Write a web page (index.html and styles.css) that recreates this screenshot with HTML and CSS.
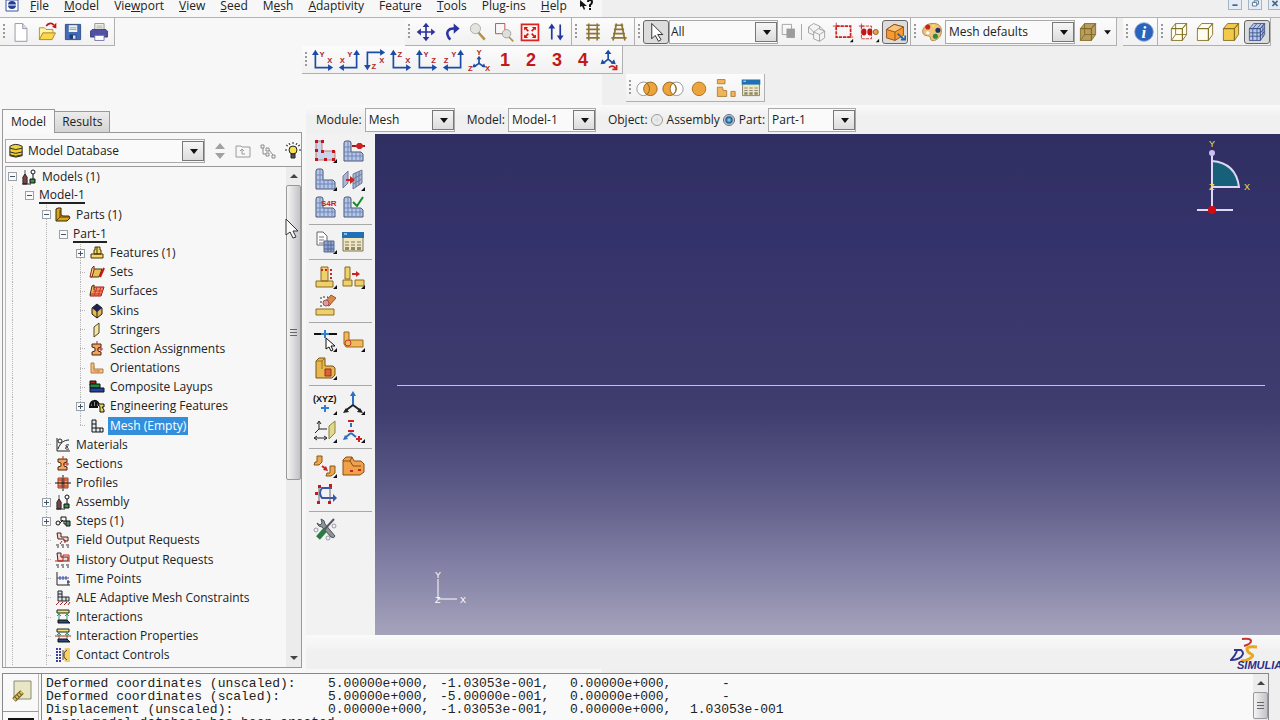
FILE: index.html
```html
<!DOCTYPE html>
<html lang="en">
<head>
  <meta charset="UTF-8">
  <meta name="viewport" content="width=device-width, initial-scale=1.0">
  <title>Mesh - Model-1</title>
  <link rel="stylesheet" href="styles.css">
</head>
<body>
  <!-- shared icon shapes -->
  <svg class="sprite" aria-hidden="true">
    <symbol id="lmesh" viewBox="0 0 26 26">
      <path d="M4 5q0-2 2-2h3q2 0 2 2v9h10l2 2v7H4z" fill="#b4c6ea" stroke="#4a556f"/>
      <path d="M4 9h7M4 14h7M4 18h19M8 3v20M12 14v9M16 14v9M20 14v9" stroke="#7185b3" fill="none"/>
    </symbol>
    <symbol id="corner" viewBox="0 0 26 26"><path d="M25 21v4h-4z" fill="#111"/></symbol>
    <symbol id="db-table" viewBox="0 0 26 26">
      <path d="M3 4h20v18H3z" fill="#efe6bd" stroke="#7b7756"/>
      <path d="M2 3h22v6H2z" fill="#2170b5"/><path d="M4 5h3" stroke="#fff"/>
      <path d="M5 13h4M11 13h4M17 13h4M5 16h4M11 16h4M17 16h4" stroke="#777"/>
      <path d="M5 18h4v3H5zM11 18h4v3h-4zM17 18h4v3h-4z" fill="#8d8a6c"/>
    </symbol>
    <symbol id="cube" viewBox="0 0 26 26">
      <path d="M4 9l5-6h13l-5 6zM4 9h13v14H4zM17 9l5-6v13l-5 7z" stroke="#7c6a1c" stroke-linejoin="round"/>
    </symbol>
    <symbol id="i-tower" viewBox="0 0 16 16">
      <path d="M2 15V8l2-3 2 3v7zM1 15h9" fill="#8c3a3a" stroke="#222"/><path d="M4 1v4M1 9h6M1 12h6" stroke="#555"/>
      <circle cx="12" cy="3" r="2" fill="#fff" stroke="#111"/><path d="M12 5v5" stroke="#111"/><path d="M9 10h5v4H9z" fill="#3b8f4c" stroke="#111"/>
    </symbol>
    <symbol id="i-part" viewBox="0 0 16 16">
      <path d="M1 2l2-1h3v7l2 1h6l1 2-3 3H1z" fill="#d9a520" stroke="#3a2500"/><path d="M5 3v7h9M1 14l4-4" fill="none" stroke="#5a3c00"/>
    </symbol>
    <symbol id="i-feature" viewBox="0 0 16 16">
      <path d="M2 9h12v4H2zM5 9V5h1V2h5v3h1v4z" fill="#f4d570" stroke="#473500"/><path d="M8 2v7" stroke="#473500"/>
    </symbol>
    <symbol id="i-set" viewBox="0 0 16 16">
      <path d="M4 5h9l-3 8H2z" fill="#e9bf55" stroke="#403010"/><path d="M11 13l4-9" stroke="#c81414" stroke-width="2"/><path d="M1 13l2-9 2-2v4l-2 7z" fill="#f3d98c" stroke="#8a2010"/>
    </symbol>
    <symbol id="i-surface" viewBox="0 0 16 16">
      <path d="M4 4h11l-3 9H1z" fill="#f28a66" stroke="#a01a10"/><path d="M8 4l-3 9M12 4l-3 9M3 8h11M2 11h10" stroke="#c9382a"/><path d="M1 12l2-9 2-1v5" fill="#f1c25c" stroke="#403010"/>
    </symbol>
    <symbol id="i-skin" viewBox="0 0 16 16">
      <path d="M8 1l5 4v6l-5 4-5-4V5z" fill="#e7b95b" stroke="#20180a"/><path d="M8 1l5 4-5 4-5-4z" fill="#1b2550"/><path d="M8 8v7" stroke="#20180a"/>
    </symbol>
    <symbol id="i-stringer" viewBox="0 0 16 16"><path d="M5 5l5-4v10l-5 4z" fill="#f5e69d" stroke="#4b4632"/></symbol>
    <symbol id="i-section" viewBox="0 0 16 16">
      <path d="M3 3h9v3l-3 1v3l3 1v3H3v-3l3-1V7L3 6z" fill="#f0a45c" stroke="#4a2410"/><path d="M8 0v3M8 8h6M12 6v4" stroke="#b5281b" fill="none"/>
    </symbol>
    <symbol id="i-orient" viewBox="0 0 16 16"><path d="M2 3h3v6h9v4H2z" fill="#f2bf84" stroke="#b77b3e"/><path d="M5 6v5h6M9 9v4" stroke="#c98a4b" fill="none"/></symbol>
    <symbol id="i-layup" viewBox="0 0 16 16">
      <path d="M1 2h6v4H1z" fill="#a52020" stroke="#111"/><path d="M1 5h10v4H1z" fill="#1f8a3d" stroke="#111"/><path d="M1 9h14v4H1z" fill="#2442a8" stroke="#111"/>
    </symbol>
    <symbol id="i-eng" viewBox="0 0 16 16">
      <path d="M1 9c0-8 9-8 9-1M4 4v5M7 4v5M0 9h9" fill="#888" stroke="#111" stroke-width="2"/><path d="M9 6h6v3h-2l2 3v2h-4V9z" fill="#ecd652" stroke="#111"/>
    </symbol>
    <symbol id="i-mesh" viewBox="0 0 16 16"><path d="M3 2h4v8h7v4H3zM3 6h4M3 10h4v4M11 10v4" fill="#e6ecf5" stroke="#111"/></symbol>
    <symbol id="i-material" viewBox="0 0 16 16"><path d="M2 1v13h13M3 12C5 6 9 3 14 3" fill="none" stroke="#222"/><circle cx="5" cy="4" r="2" fill="none" stroke="#222"/><path d="M14 8c-4-1-4 2-1 2-4 0-3 3 1 2" fill="none" stroke="#222"/></symbol>
    <symbol id="i-profile" viewBox="0 0 16 16"><path d="M3 3h4v10H3zM9 3h4v10H9z" fill="#ee9a72" stroke="#a33b22"/><path d="M0 8h16M8 0v16" stroke="#111"/><path d="M3 5h10M3 11h10" stroke="#a33b22"/></symbol>
    <symbol id="i-step" viewBox="0 0 16 16"><circle cx="3" cy="10" r="2" fill="none" stroke="#111"/><path d="M5 10l3-3M6 4h5v4H6z" fill="none" stroke="#111"/><path d="M11 8h4v5h-4z" fill="#4e9461" stroke="#111"/><path d="M9 8v3h2" fill="none" stroke="#111"/></symbol>
    <symbol id="i-field" viewBox="0 0 16 16"><path d="M2 1h4v4h7v4H9V7H3z" fill="#f3d8d2" stroke="#4a2020"/><path d="M7 9l-2 3M10 8v3" stroke="#a32020"/><path d="M1 13h3M6 13h3M11 13h3M2 15h2M7 15h2M12 15h2" stroke="#333"/></symbol>
    <symbol id="i-history" viewBox="0 0 16 16"><path d="M2 1h4v4h7v4H3z" fill="#f3d8d2" stroke="#4a2020"/><path d="M0 9h8V3h6v7" fill="none" stroke="#d01a1a"/><path d="M1 13h3M6 13h3M11 13h3M2 15h2M7 15h2M12 15h2" stroke="#333"/></symbol>
    <symbol id="i-time" viewBox="0 0 16 16"><path d="M2 1v13h13" fill="none" stroke="#222"/><path d="M2 7h12M5 5v4M8 5v4M11 5v4" stroke="#3546a0"/><path d="M13 9v5M12 11h3" stroke="#222"/></symbol>
    <symbol id="i-ale" viewBox="0 0 16 16"><path d="M3 1h4v6h7v4H3zM3 4h4M3 7h4v4M11 7v4" fill="#dbe0f0" stroke="#222"/><path d="M1 15l3-3M5 15l3-3M9 15l3-3M13 15l2-3" stroke="#a32222"/></symbol>
    <symbol id="i-inter" viewBox="0 0 16 16"><path d="M2 1h12v3H2z" fill="#efe47a" stroke="#222"/><path d="M4 4v7M12 4v7M2 7l2-2 2 2M10 7l2-2 2 2" stroke="#299866" fill="none"/><path d="M3 11h9l3 3H3z" fill="#2d4b7c" stroke="#111"/></symbol>
    <symbol id="i-contact" viewBox="0 0 16 16"><path d="M10 1h5v14h-5l-2-7z" fill="#f2d267"/><path d="M2 1v14M5 1v14" stroke="#3c41a8" stroke-width="2" stroke-dasharray="2 1"/><path d="M8 3v10M12 3c-4 2-4 8 0 10" stroke="#593a3e" fill="none"/></symbol>
  </svg>

  <header class="menubar">
    <svg class="app-mark" viewBox="0 0 14 12"><path d="M1 0h12v11H1z" fill="#fff" stroke="#3b57a8"/><ellipse cx="7" cy="5" rx="4" ry="4" fill="#243f94"/><path d="M2 5h10" stroke="#fff"/></svg>
    <nav class="menus">
      <a href="#"><u>F</u>ile</a>
      <a href="#"><u>M</u>odel</a>
      <a href="#">Vie<u>w</u>port</a>
      <a href="#"><u>V</u>iew</a>
      <a href="#"><u>S</u>eed</a>
      <a href="#">M<u>e</u>sh</a>
      <a href="#"><u>A</u>daptivity</a>
      <a href="#">Feat<u>u</u>re</a>
      <a href="#"><u>T</u>ools</a>
      <a href="#">Plu<u>g</u>-ins</a>
      <a href="#"><u>H</u>elp</a>
    </nav>
    <button class="plain" aria-label="Context help"><svg width="14" height="12" viewBox="0 0 14 12"><path d="M1 0v7l2-1 2 4 1-1-1-3h3z" fill="#111"/><path d="M9 2q0-2 2-2 2 0 2 2t-2 3v2M11 8v2" fill="none" stroke="#111" stroke-width="2"/></svg></button>
    <div class="win-buttons">
      <button aria-label="Minimize"><svg viewBox="0 0 14 10"><path d="M4 6h6" stroke="#456a86" stroke-width="2"/></svg></button>
      <button aria-label="Restore"><svg viewBox="0 0 14 10"><path d="M6 3V1h5v4H9M4 3h5v4H4z" fill="#fff" stroke="#456a86"/></svg></button>
      <button aria-label="Close"><svg viewBox="0 0 14 10"><path d="M4 1l6 6M10 1L4 7" stroke="#456a86" stroke-width="2"/></svg></button>
    </div>
  </header>

  <div class="toolrow">
    <div class="toolbar">
      <button aria-label="New"><svg viewBox="0 0 26 26"><path d="M6 3h9l5 6v15H6z" fill="#fff" stroke="#8a8aa0"/><path d="M15 3v6h5" fill="#dde" stroke="#8a8aa0"/></svg></button>
      <button aria-label="Open"><svg viewBox="0 0 26 26"><path d="M4 22V8h6l2 2h8v4" fill="#fff3a8" stroke="#a08628"/><path d="M4 22l4-8h15l-4 8z" fill="#fbd64b" stroke="#a07a18"/><path d="M12 6c3-4 7-4 9-1" fill="none" stroke="#c41515" stroke-width="2"/><path d="M19 7l5 2V2z" fill="#c41515"/></svg></button>
      <button aria-label="Save"><svg viewBox="0 0 26 26"><path d="M4 4h18v18H4z" fill="#426cb8" stroke="#2a4580"/><path d="M8 5h10v8H8z" fill="#eef3ee"/><path d="M9 8h8M9 10h8" stroke="#8aa08a"/><path d="M9 16h8v5H9z" fill="#233c6e"/><path d="M13 17h3v4h-3z" fill="#dde"/></svg></button>
      <button aria-label="Print"><svg viewBox="0 0 26 26"><path d="M8 3h11v8H8z" fill="#f0f0e4" stroke="#888"/><path d="M10 6h7M10 8h7" stroke="#aaa"/><path d="M3 12l2-2h16l2 2v7H3z" fill="#5252a4" stroke="#35356e"/><path d="M8 17h11v6H8z" fill="#fff" stroke="#6a6aa0"/></svg></button>
    </div>
    <div class="toolbar view-tools">
      <button aria-label="Pan"><svg viewBox="0 0 26 26" fill="#2b35a0"><path d="M12 6h2v14h-2zM6 12h14v2H6z"/><path d="M13 2l4 5H9zM13 24l4-5H9zM2 13l5-4v8zM24 13l-5-4v8z"/></svg></button>
      <button aria-label="Rotate"><svg viewBox="0 0 26 26"><path d="M11 22C4 14 8 8 17 9" fill="none" stroke="#2b35a0" stroke-width="3"/><path d="M15 3l7 6-7 6z" fill="#2b35a0"/></svg></button>
      <button aria-label="Zoom"><svg viewBox="0 0 26 26"><path d="M13 13l8 9" stroke="#b59343" stroke-width="3"/><circle cx="10" cy="9" r="6" fill="#e3e3e0" stroke="#a5a5a5"/></svg></button>
      <button aria-label="Box zoom"><svg viewBox="0 0 26 26"><path d="M3 3h11v12H3z" fill="none" stroke="#c33"/><path d="M18 18l6 6" stroke="#b59343" stroke-width="2"/><circle cx="16" cy="15" r="5" fill="#dededa" stroke="#999"/></svg></button>
      <button aria-label="Auto-fit"><svg viewBox="0 0 26 26"><path d="M3 4h20v19H3z" fill="#fff4f0" stroke="#d22" stroke-width="2"/><path d="M6 11V7h5zM20 11V7h-5zM6 16v4h5zM20 16v4h-5z" fill="#d01515"/><path d="M7 8l4 4M19 8l-4 4M7 19l4-4M19 19l-4-4" stroke="#d01515" stroke-width="2"/></svg></button>
      <button aria-label="Cycle views"><svg viewBox="0 0 26 26" fill="#2336a0"><path d="M7 7h2v15H7zM17 4h2v15h-2z"/><path d="M8 3l4 6H4zM18 23l4-6h-8z"/></svg></button>
    </div>
    <div class="toolbar">
      <button aria-label="Parallel view"><svg viewBox="0 0 26 26"><path d="M8 3v20M18 3v20M5 5h16M5 10h16M5 15h16M5 20h16" stroke="#8f7434" stroke-width="2"/></svg></button>
      <button aria-label="Perspective view"><svg viewBox="0 0 26 26"><path d="M10 3L6 23M16 3l4 20M8 5h10M7 10h12M6 15h14M4 20h18" stroke="#8f7434" stroke-width="2"/></svg></button>
    </div>
    <div class="toolbar">
      <button class="pressed" aria-label="Select"><svg viewBox="0 0 26 26"><path d="M8 3v18l4-4 4 7 3-2-4-6h6z" fill="#fff" stroke="#111"/></svg></button>
      <span class="combo w-filter"><select aria-label="Selection filter"><option>All</option></select></span>
      <button class="slim" aria-label="Highlight"><svg viewBox="0 0 26 26"><path d="M5 4h11v12H5z" fill="none" stroke="#999"/><path d="M10 9h10v11H10z" fill="#9c9c9c"/></svg></button>
      <span class="divider"></span>
      <button aria-label="Select inside"><svg viewBox="0 0 26 26" fill="#f4f4f4" stroke="#999"><path d="M3 7l6-4 7 3v7l-6 4-7-3z"/><path d="M9 13l6-4 7 3v8l-6 4-7-3z"/><path d="M9 13l7 3 6-4M16 16v8M3 7l6 6M16 6l6 6" fill="none"/></svg></button>
      <button aria-label="Drag shape"><svg viewBox="0 0 26 26"><path d="M5 6h17v13H5z" fill="none" stroke="#c22" stroke-width="2" stroke-dasharray="4 1"/><path d="M1 6h8M5 2v8M18 19h7" stroke="#c22"/><use href="#corner"/></svg></button>
      <button aria-label="Selection method"><svg viewBox="0 0 26 26"><path d="M4 6h12v15H4z" fill="none" stroke="#c22" stroke-dasharray="4 1"/><path d="M1 6h6M4 3v6" stroke="#c22"/><ellipse cx="7" cy="13" rx="3" ry="4" fill="#c01616"/><ellipse cx="14" cy="13" rx="3" ry="4" fill="#c01616"/><circle cx="21" cy="13" r="3" fill="#e5a34c" stroke="#85561b"/><use href="#corner"/></svg></button>
      <button class="pressed" aria-label="Select exterior"><svg viewBox="0 0 26 26"><path d="M3 10l9-6 11 3v10l-10 6-10-3z" fill="#f39a33" stroke="#8a4a0c"/><path d="M3 10l9-6 11 3-10 6z" fill="#f9c477" stroke="#8a4a0c"/><path d="M13 13v10" stroke="#8a4a0c"/><path d="M16 15l8 7M25 17v5h-5" stroke="#2b62a8" stroke-width="2" fill="none"/></svg></button>
    </div>
    <div class="toolbar">
      <button aria-label="Color code"><svg viewBox="0 0 26 26"><path d="M13 3c8-1 12 4 11 11-1 6-7 10-11 9-3-1-1-4-3-5-3-1-8 0-8-6 0-4 5-9 11-9z" fill="#ecc47d" stroke="#a97834"/><circle cx="8" cy="7" r="3" fill="#c92222"/><circle cx="15" cy="6" r="2" fill="#f2e14c"/><circle cx="20" cy="11" r="3" fill="#25305f"/><circle cx="17" cy="18" r="3" fill="#2d8a3a"/><circle cx="8" cy="14" r="2" fill="#fff"/></svg></button>
      <span class="combo w-color"><select aria-label="Color mapping"><option>Mesh defaults</option></select></span>
      <button aria-label="Translucency"><svg viewBox="0 0 26 26" fill="#b99c62"><use href="#cube"/><path d="M9 3v13h13M9 16l-5 7" fill="none" stroke="#7c6a1c"/></svg></button>
      <button class="tiny" aria-label="Translucency options"><svg viewBox="0 0 12 26"><path d="M2 11h8l-4 5z" fill="#111"/></svg></button>
    </div>
    <div class="toolbar tight info-tools">
      <button aria-label="Query"><svg viewBox="0 0 26 26"><circle cx="13" cy="13" r="11" fill="#2b63bb" stroke="#8fa9d0"/><text x="10" y="20" class="info-i">i</text></svg></button>
    </div>
    <div class="toolbar tight">
      <button aria-label="Wireframe"><svg viewBox="0 0 26 26" fill="#fffdf0"><use href="#cube"/><path d="M9 3v13h13M9 16l-5 7" fill="none" stroke="#7c6a1c"/></svg></button>
      <button aria-label="Hidden"><svg viewBox="0 0 26 26" fill="#fffdf0"><use href="#cube"/></svg></button>
      <button aria-label="Shaded"><svg viewBox="0 0 26 26" fill="#f3c94a"><use href="#cube"/></svg></button>
      <button class="pressed" aria-label="Mesh display"><svg viewBox="0 0 26 26"><path d="M4 9l5-6h13l-5 6zM4 9h13v14H4zM17 9l5-6v13l-5 7z" fill="#b5c8ea" stroke="#3a4f86"/><path d="M8 9v14M13 9v14M4 14h13l5-6M4 18h13l5-6M8 9l5-6M13 9l5-6M20 6v13" fill="none" stroke="#3a4f86"/></svg></button>
    </div>
  </div>

  <div class="toolrow">
    <div class="toolbar tight axis-tools">
      <button aria-label="Front view"><svg viewBox="0 0 26 26" class="axis"><path d="M4 5v17h16"/><path class="tip" d="M4 1l4 6H0zM25 22l-6-4v8z"/><text x="9" y="9">Y</text><text x="18" y="16">X</text></svg></button>
      <button aria-label="Back view"><svg viewBox="0 0 26 26" class="axis"><path d="M22 5v17H6"/><path class="tip" d="M22 1l4 6h-8zM1 22l6-4v8z"/><text x="11" y="9">Y</text><text x="2" y="16">X</text></svg></button>
      <button aria-label="Top view"><svg viewBox="0 0 26 26" class="axis"><path d="M20 4H4v15"/><path class="tip" d="M25 4l-6-4v8zM4 25l-4-6h8z"/><text x="9" y="24">Z</text><text x="18" y="16">X</text></svg></button>
      <button aria-label="Bottom view"><svg viewBox="0 0 26 26" class="axis"><path d="M4 5v17h16"/><path class="tip" d="M4 1l4 6H0zM25 22l-6-4v8z"/><text x="9" y="9">Z</text><text x="18" y="16">X</text></svg></button>
      <button aria-label="Left view"><svg viewBox="0 0 26 26" class="axis"><path d="M4 5v17h16"/><path class="tip" d="M4 1l4 6H0zM25 22l-6-4v8z"/><text x="9" y="9">Y</text><text x="18" y="16">Z</text></svg></button>
      <button aria-label="Right view"><svg viewBox="0 0 26 26" class="axis"><path d="M22 5v17H6"/><path class="tip" d="M22 1l4 6h-8zM1 22l6-4v8z"/><text x="11" y="9">Y</text><text x="2" y="16">Z</text></svg></button>
      <button aria-label="Iso view"><svg viewBox="0 0 26 26" class="axis"><path d="M13 11v6l-6 4M13 17l6 4"/><path class="tip" d="M13 8l3 4h-6zM5 22l5-1-3-4zM21 22l-5-1 3-4z"/><text x="10" y="7">Y</text><text x="0" y="26">Z</text><text x="20" y="26">X</text></svg></button>
      <button class="num">1</button>
      <button class="num">2</button>
      <button class="num">3</button>
      <button class="num">4</button>
      <button aria-label="Specify view"><svg viewBox="0 0 26 26" class="axis"><path d="M12 5v7l-6 5M12 12l6 5"/><path class="tip" d="M12 1l4 5H8zM3 18l6-1-4-5zM21 18l-6-1 4-5z"/><path d="M13 22q4-4 8 1M22 19v5h-5" class="red"/></svg></button>
    </div>
  </div>

  <div class="toolrow">
    <div class="toolbar tight set-tools">
      <button aria-label="Replace set"><svg viewBox="0 0 26 26"><circle cx="9" cy="14" r="8" fill="#fff" stroke="#888"/><circle cx="17" cy="14" r="8" fill="#eda43d" stroke="#8a5a18"/><path d="M13 7q6 7 0 14" fill="none" stroke="#8a5a18"/></svg></button>
      <button aria-label="Remove set"><svg viewBox="0 0 26 26"><circle cx="17" cy="14" r="8" fill="#fff" stroke="#888"/><circle cx="9" cy="14" r="8" fill="#eda43d" stroke="#8a5a18"/><path d="M13 7q-7 7 0 14 7-7 0-14" fill="#fff" stroke="#8a5a18"/></svg></button>
      <button aria-label="Replace all"><svg viewBox="0 0 26 26"><circle cx="13" cy="14" r="8" fill="#eda43d" stroke="#a06a20"/></svg></button>
      <button aria-label="Part groups"><svg viewBox="0 0 26 26" fill="#f2b458" stroke="#a37a38"><path d="M4 3h9v5H4zM4 12h6l1 4h4v7H4zM20 17h5v6h-5z"/></svg></button>
      <button aria-label="Display group manager"><svg viewBox="0 0 26 26"><use href="#db-table"/></svg></button>
    </div>
  </div>

  <main class="work">
    <aside class="side">
      <div class="tabs">
        <button class="tab active">Model</button>
        <button class="tab">Results</button>
      </div>
      <div class="side-body">
        <div class="db-row">
          <svg class="db-icon" viewBox="0 0 18 16"><path d="M2 3q6-4 13 0v10q-7 3-13 0z" fill="#f0cf3a" stroke="#222"/><path d="M2 5q6 3 13 0M2 9q6 3 13 0M2 12q6 3 13 0" fill="none" stroke="#222"/></svg>
          <span class="combo w-db"><select aria-label="Tree source"><option>Model Database</option></select></span>
          <button aria-label="Up or down"><svg width="12" height="18" viewBox="0 0 12 18"><path d="M1 7l5-6 5 6zM1 11l5 6 5-6z" fill="#a2a2a2"/></svg></button>
          <button aria-label="Parent folder"><svg width="16" height="16" viewBox="0 0 16 16" fill="none" stroke="#9a9a9a"><path d="M1 3h5l1 1h8v10H1z"/><path d="M10 11H7V6M5 8l2-2 2 2"/></svg></button>
          <button aria-label="Filter tree"><svg width="16" height="16" viewBox="0 0 16 16" fill="none" stroke="#8a8a8a"><path d="M1 2h3v3H1zM6 5h3v3H6zM6 10h3v3H6zM12 12h3v3h-3zM3 5v6h3M9 7l4 5"/></svg></button>
          <button aria-label="Tips"><svg width="16" height="18" viewBox="0 0 16 18"><circle cx="8" cy="8" r="4" fill="#f6e04b" stroke="#222"/><path d="M6 12h4v4H6z" fill="#555" stroke="#222"/><path d="M1 3l2 1M0 8h2M14 8h2M13 4l2-1M8 0v2M4 1l1 2M12 1l-1 2" stroke="#222"/></svg></button>
        </div>
        <div class="tree-box">
          <ul class="tree">
            <li class="l0"><button class="knob" aria-label="Collapse"></button><svg><use href="#i-tower"/></svg><span>Models (1)</span></li>
            <li class="l1"><button class="knob" aria-label="Collapse"></button><span class="under">Model-1</span></li>
            <li class="l2"><button class="knob" aria-label="Collapse"></button><svg><use href="#i-part"/></svg><span>Parts (1)</span></li>
            <li class="l3"><button class="knob" aria-label="Collapse"></button><span class="under">Part-1</span></li>
            <li class="l4"><button class="knob plus" aria-label="Expand"></button><svg><use href="#i-feature"/></svg><span>Features (1)</span></li>
            <li class="l4"><i></i><svg><use href="#i-set"/></svg><span>Sets</span></li>
            <li class="l4"><i></i><svg><use href="#i-surface"/></svg><span>Surfaces</span></li>
            <li class="l4"><i></i><svg><use href="#i-skin"/></svg><span>Skins</span></li>
            <li class="l4"><i></i><svg><use href="#i-stringer"/></svg><span>Stringers</span></li>
            <li class="l4"><i></i><svg><use href="#i-section"/></svg><span>Section Assignments</span></li>
            <li class="l4"><i></i><svg><use href="#i-orient"/></svg><span>Orientations</span></li>
            <li class="l4"><i></i><svg><use href="#i-layup"/></svg><span>Composite Layups</span></li>
            <li class="l4"><button class="knob plus" aria-label="Expand"></button><svg><use href="#i-eng"/></svg><span>Engineering Features</span></li>
            <li class="l4 last"><i></i><svg><use href="#i-mesh"/></svg><span class="selected">Mesh (Empty)</span></li>
            <li class="l2"><i></i><svg><use href="#i-material"/></svg><span>Materials</span></li>
            <li class="l2"><i></i><svg><use href="#i-section"/></svg><span>Sections</span></li>
            <li class="l2"><i></i><svg><use href="#i-profile"/></svg><span>Profiles</span></li>
            <li class="l2"><button class="knob plus" aria-label="Expand"></button><svg><use href="#i-tower"/></svg><span>Assembly</span></li>
            <li class="l2"><button class="knob plus" aria-label="Expand"></button><svg><use href="#i-step"/></svg><span>Steps (1)</span></li>
            <li class="l2"><i></i><svg><use href="#i-field"/></svg><span>Field Output Requests</span></li>
            <li class="l2"><i></i><svg><use href="#i-history"/></svg><span>History Output Requests</span></li>
            <li class="l2"><i></i><svg><use href="#i-time"/></svg><span>Time Points</span></li>
            <li class="l2"><i></i><svg><use href="#i-ale"/></svg><span>ALE Adaptive Mesh Constraints</span></li>
            <li class="l2"><i></i><svg><use href="#i-inter"/></svg><span>Interactions</span></li>
            <li class="l2"><i></i><svg viewBox="0 0 16 16"><use href="#i-inter"/><path d="M0 8h16" stroke="#c22"/></svg><span>Interaction Properties</span></li>
            <li class="l2"><i></i><svg><use href="#i-contact"/></svg><span>Contact Controls</span></li>
          </ul>
          <div class="scroll">
            <span class="arrow up"></span>
            <span class="thumb"></span>
            <span class="arrow down"></span>
          </div>
          <svg class="pointer" viewBox="0 0 14 21"><path d="M1 1v16l4-3 3 6 3-1-3-6h5z" fill="#f8f8f8" stroke="#333"/></svg>
        </div>
      </div>
    </aside>

    <section class="stage">
      <form class="context">
        <label for="module">Module:</label>
        <span class="combo w-module"><select id="module"><option>Mesh</option></select></span>
        <label for="model" class="next">Model:</label>
        <span class="combo w-model"><select id="model"><option>Model-1</option></select></span>
        <span class="next">Object:</span>
        <input type="radio" name="object" id="assembly"><label for="assembly">Assembly</label>
        <input type="radio" name="object" id="part" checked><label for="part">Part:</label>
        <span class="combo w-model"><select aria-label="Part"><option>Part-1</option></select></span>
      </form>

      <div class="canvas-row">
        <div class="toolbox">
          <div class="tool-group">
            <button aria-label="Seed part"><svg viewBox="0 0 26 26"><path d="M4 3h6v10h13v9H4z" fill="#c9d5ec" stroke="#c77"/><path d="M3 2h3v3H3zM9 2h3v3H9zM3 11h3v3H3zM9 12h3v3H9zM20 12h3v3h-3zM3 20h3v3H3zM12 20h3v3h-3zM20 20h3v3h-3z" fill="#c01616"/><use href="#corner"/></svg></button>
            <button aria-label="Mesh controls"><svg viewBox="0 0 26 26"><use href="#lmesh"/><path d="M12 8h13" stroke="#a01818" stroke-width="2"/><path d="M15 8l3-3h3l3 3-3 3h-3z" fill="#cc2222"/></svg></button>
            <button aria-label="Mesh part"><svg viewBox="0 0 26 26"><use href="#lmesh"/><use href="#corner"/></svg></button>
            <button aria-label="Offset mesh"><svg viewBox="0 0 26 26"><path d="M3 10l5-5v12l-5 5zM13 8l9-4v13l-9 6z" fill="#a9b7d4" stroke="#6c7a9c"/><path d="M16 7v14M19 5v14M13 13l9-5M13 18l9-5" stroke="#6c7a9c"/><path d="M6 14h5" stroke="#c22" stroke-width="2"/><path d="M10 10l5 4-5 4z" fill="#c22"/><use href="#corner"/></svg></button>
            <button aria-label="Element type"><svg viewBox="0 0 26 26"><use href="#lmesh"/><text x="9" y="12" class="s4r">S4R</text></svg></button>
            <button aria-label="Verify mesh"><svg viewBox="0 0 26 26"><use href="#lmesh"/><path d="M13 8l4 4 6-9" fill="none" stroke="#178a2c" stroke-width="2"/></svg></button>
          </div>
          <div class="tool-group">
            <button aria-label="Create mesh part"><svg viewBox="0 0 26 26"><path d="M5 3h6l4 4v9H5z" fill="#fff" stroke="#666"/><path d="M7 8h5M7 11h5M7 14h5" stroke="#777"/><path d="M12 12h10v11H12z" fill="#8fa6d0" stroke="#54678f"/><path d="M12 16h10M12 20h10M16 12v11M19 12v11" stroke="#54678f"/><use href="#corner"/></svg></button>
            <button aria-label="Mesh manager"><svg viewBox="0 0 26 26"><use href="#db-table"/></svg></button>
          </div>
          <div class="tool-group">
            <button aria-label="Partition edge"><svg viewBox="0 0 26 26"><path d="M9 3h7v14H9zM4 17h17v6H4z" fill="#efd06a" stroke="#8a6a20"/><path d="M9 6h7M19 5v11" stroke="#c22" stroke-width="2" stroke-dasharray="2 2"/><use href="#corner"/></svg></button>
            <button aria-label="Partition face"><svg viewBox="0 0 26 26"><path d="M5 3h5v12H5zM3 16h9v6H3zM15 16h9v6h-9z" fill="#efd06a" stroke="#8a6a20"/><path d="M12 10h5" stroke="#c22" stroke-width="2"/><path d="M16 7l4 3-4 3z" fill="#c22"/><use href="#corner"/></svg></button>
            <button aria-label="Edit feature"><svg viewBox="0 0 26 26"><path d="M4 17h18v6H4z" fill="#efd06a" stroke="#8a6a20"/><path d="M9 15V5h7v9" fill="none" stroke="#333" stroke-dasharray="2 2"/><path d="M12 11l7-8 5 3-7 8z" fill="#d98b4c" stroke="#9c5630"/><circle cx="14" cy="11" r="3" fill="#e09a9a" stroke="#955"/></svg></button>
          </div>
          <div class="tool-group">
            <button aria-label="Datum pick"><svg viewBox="0 0 26 26"><path d="M2 7h7M17 7h8" stroke="#111" stroke-width="2"/><path d="M13 3v8M9 7h8" stroke="#2f7fd0" stroke-width="2"/><path d="M14 11v11l3-2 2 4 2-1-2-4h4z" fill="#fff" stroke="#111"/><use href="#corner"/></svg></button>
            <button aria-label="Partition cell"><svg viewBox="0 0 26 26"><path d="M4 5h5v8h14v7H6l-2-3z" fill="#f0b95a" stroke="#9a6820"/><circle cx="8" cy="16" r="3" fill="none" stroke="#c33"/><use href="#corner"/></svg></button>
            <button aria-label="Virtual topology"><svg viewBox="0 0 26 26"><path d="M4 6l3-3h6v8h8l2 2v7l-3 3H4z" fill="#e8b84e" stroke="#7a5518"/><path d="M4 6h6v8M10 6l3-3" stroke="#9a7020" fill="none"/><path d="M13 14h6v7h-6z" fill="#d9623a" stroke="#9a3018"/><use href="#corner"/></svg></button>
          </div>
          <div class="tool-group">
            <button aria-label="Datum point"><svg viewBox="0 0 26 26"><text x="1" y="12" class="xyz">(XYZ)</text><path d="M13 15v7M9 18h8" stroke="#2f7fd0" stroke-width="2"/><use href="#corner"/></svg></button>
            <button aria-label="Datum axis"><svg viewBox="0 0 26 26"><path d="M13 4v12" stroke="#2f6fc0" stroke-width="2"/><path d="M13 1l3 5h-6z" fill="#2f6fc0"/><path d="M13 15l-8 6M13 15l8 6" stroke="#222" stroke-width="2"/><path d="M3 23l6-1-3-4zM23 23l-6-1 3-4z" fill="#222"/><use href="#corner"/></svg></button>
            <button aria-label="Datum plane"><svg viewBox="0 0 26 26"><path d="M7 4v7h8M7 11l-4 4M5 6l2-3 2 3M3 20h11M5 18l-3 2 3 2M12 18l3 2-3 2" fill="none" stroke="#222"/><path d="M17 8l6-5v12l-6 6z" fill="#e3d98a" stroke="#8a8240"/><use href="#corner"/></svg></button>
            <button aria-label="Datum csys"><svg viewBox="0 0 26 26"><path d="M11 5v4M11 15l-5 4M11 15l5 4" stroke="#2f6fc0" stroke-width="2"/><path d="M8 3h6M8 13h6M16 21h6M19 18v6" stroke="#d02020" stroke-width="2"/><path d="M3 22l5-1-3-4z" fill="#2f6fc0"/><use href="#corner"/></svg></button>
          </div>
          <div class="tool-group">
            <button aria-label="Associate mesh"><svg viewBox="0 0 26 26"><path d="M5 3h5v6l-3 3H2l1-3h2zM18 13h5v7l-4 3h-5l1-3h3z" fill="#eda84b" stroke="#8a5518"/><path d="M10 13l4 3" stroke="#c22" stroke-width="2"/><path d="M16 18l-5-1 3-4z" fill="#c22"/><use href="#corner"/></svg></button>
            <button aria-label="Create topology"><svg viewBox="0 0 26 26"><path d="M3 7l3-3h6l2 4h7l3 3v8l-4 3H3z" fill="#f0a24a" stroke="#8a4c14"/><path d="M3 8h7l3 5h8M10 8l2-4" fill="none" stroke="#8a4c14"/><path d="M10 18h3M18 17h3" stroke="#c22" stroke-width="2"/></svg></button>
            <button aria-label="Edit mesh"><svg viewBox="0 0 26 26"><path d="M20 7H10q-4 5 0 10h14" fill="none" stroke="#3956a8" stroke-width="2"/><path d="M21 13l4 4-4 4z" fill="#3956a8"/><path d="M7 7v13M18 5v15" stroke="#667"/><path d="M6 4h3v3H6zM17 3h3v3h-3zM5 20h3v3H5zM16 20h3v3h-3zM3 11h3v3H3z" fill="#c81818"/></svg></button>
          </div>
          <div class="tool-group">
            <button aria-label="Tools"><svg viewBox="0 0 26 26"><path d="M5 7q1 4 5 4l9 10q3 2 4-1L13 8q0-4-4-5l1 4-2 2z" fill="#8c9498" stroke="#4d5558"/><path d="M22 3L12 14" stroke="#556" stroke-width="2"/><path d="M13 14l-7 8" stroke="#2c7a45" stroke-width="5"/><circle cx="4" cy="14" r="2" fill="none" stroke="#99a"/><circle cx="22" cy="10" r="2" fill="none" stroke="#99a"/><circle cx="16" cy="22" r="2" fill="none" stroke="#99a"/></svg></button>
          </div>
        </div>

        <div class="viewport">
          <div class="wire"></div>
          <svg class="compass" viewBox="0 0 56 78">
            <path d="M16 22q24 2 27 26H16z" fill="#17607a" stroke="#ded8f4" stroke-width="2"/>
            <path d="M16 14v56M1 71h36" stroke="#ded8f4" stroke-width="2"/>
            <circle cx="16" cy="14" r="3" fill="#cbbcf2"/><circle cx="16" cy="71" r="4" fill="#d40a12"/>
            <text x="13" y="8">Y</text><text x="13" y="51">Z</text><text x="48" y="51">X</text>
          </svg>
          <svg class="triad" viewBox="0 0 34 34"><path d="M4 8v20h19" fill="none" stroke="#fff"/><text x="1" y="7">Y</text><text x="1" y="32">Z</text><text x="26" y="32">X</text></svg>
        </div>
      </div>

      <div class="prompt">
        <svg class="brand" viewBox="0 0 60 36">
          <path d="M12 2q9-1 9 2t-7 5" fill="none" stroke="#c8322c" stroke-width="2"/>
          <path d="M4 13h7q4 3 0 7-4 3-10 3 4-4 6-9" fill="none" stroke="#2d3590" stroke-width="2"/>
          <path d="M27 10q-10-1-10 2t4 5-2 5-8 1" fill="none" stroke="#e8a820" stroke-width="3"/>
          <text x="7" y="32">SIMULIA</text>
        </svg>
      </div>
    </section>
  </main>

  <footer class="messages">
    <div class="msg-tabs">
      <button class="active" aria-label="Message area"><svg viewBox="0 0 26 26"><path d="M6 3h17v18H6z" fill="#e9e6c4" stroke="#8a8a7a"/><path d="M14 14l-8 8" stroke="#6b5a1c" stroke-width="5"/><path d="M14 14l-8 8" stroke="#dcc060" stroke-width="3" stroke-dasharray="2 1"/></svg></button>
      <button aria-label="Command line"><svg viewBox="0 0 26 26"><path d="M1 3h24v20H1z" fill="#e8dc60" stroke="#111" stroke-width="2"/></svg></button>
    </div>
    <div class="msg-text">
      <table>
        <tr><td>Deformed coordinates (unscaled):</td><td>5.00000e+000,</td><td>-1.03053e-001,</td><td>0.00000e+000,</td><td class="mid">-</td></tr>
        <tr><td>Deformed coordinates (scaled):</td><td>5.00000e+000,</td><td>-5.00000e-001,</td><td>0.00000e+000,</td><td class="mid">-</td></tr>
        <tr><td>Displacement (unscaled):</td><td>0.00000e+000,</td><td>-1.03053e-001,</td><td>0.00000e+000,</td><td>1.03053e-001</td></tr>
      </table>
      <p>A new model database has been created.</p>
    </div>
    <div class="scroll">
      <span class="arrow up"></span>
      <span class="thumb"></span>
    </div>
  </footer>
</body>
</html>
```
FILE: styles.css
```css
* {
  margin: 0;
  padding: 0;
  box-sizing: border-box;
}
html, body {
  height: 100%;
  overflow: hidden;
}
body {
  display: flex;
  flex-direction: column;
  font-family: "Open Sans", "Noto Sans", sans-serif;
  font-size: 12px;
  line-height: 16px;
  color: #222;
  background: linear-gradient(90deg, #f7f7f7 47%, #efefef 47%);
}
button {
  background: none;
  border: none;
  font: inherit;
  color: inherit;
}
.sprite {
  position: absolute;
  width: 0;
  height: 0;
}

/* menu bar */
.menubar {
  display: flex;
  align-items: flex-start;
  height: 18px;
  padding-left: 5px;
  border-bottom: 1px solid #b4b4b4;
}
.app-mark {
  width: 14px;
  height: 12px;
}
.menus {
  display: flex;
  gap: 15px;
  margin: 0 12px 0 11px;
  line-height: 12px;
}
.menus a {
  color: #222;
  text-decoration: none;
}
.plain svg,
.win-buttons svg {
  display: block;
}
.win-buttons {
  display: flex;
  gap: 6px;
  margin-left: auto;
  margin-right: -2px;
}
.win-buttons button {
  width: 14px;
  height: 10px;
  background: #e4edf5;
  border: 1px solid #a4b5c4;
  border-top: none;
}

/* toolbars */
.toolrow {
  display: flex;
  height: 28px;
}
.toolbar {
  display: flex;
  align-items: center;
  height: 28px;
  padding-right: 2px;
  border-right: 1px solid #b0b0b0;
  border-bottom: 1px solid #b0b0b0;
  background: linear-gradient(#fcfcfc, #f1f1f1);
}
.toolbar.tight {
  padding-right: 0;
}
.toolbar::before {
  content: "";
  width: 2px;
  height: 15px;
  margin: 0 3px;
  background: repeating-linear-gradient(#999 0 2px, transparent 2px 4px);
}
.toolbar button {
  width: 26px;
  height: 26px;
}
.toolbar button.slim {
  width: 22px;
}
.toolbar button.tiny {
  width: 13px;
}
.toolbar svg {
  display: block;
  width: 100%;
  height: 22px;
}
.toolbar .pressed {
  height: 24px;
  border: 1px solid #666;
  border-radius: 3px;
  background: #dcdcdc;
}
.toolbar .divider {
  width: 1px;
  height: 16px;
  margin: 0 2px 0 1px;
  background: #aaa;
}
.view-tools { margin-left: 290px; }
.info-tools { margin-left: 6px; }
.axis-tools { margin-left: 302px; }
.set-tools { margin-left: 626px; }
.toolbar .num {
  font: bold 18px/26px "Liberation Sans", sans-serif;
  color: #c41818;
}
.axis {
  fill: none;
  stroke: #1c4da6;
  stroke-width: 2;
}
.axis .tip {
  fill: #1c4da6;
  stroke: none;
}
.axis .red {
  stroke: #c22;
}
.axis text {
  font: bold 9px "Liberation Sans", sans-serif;
  fill: #b3241c;
  stroke: none;
}
.info-i {
  font: italic bold 20px "Liberation Serif", serif;
  fill: #fff;
}

/* drop-downs */
.combo {
  position: relative;
  display: block;
  height: 24px;
}
.combo select {
  width: 100%;
  height: 100%;
  padding: 0 22px 0 3px;
  appearance: none;
  font: inherit;
  color: #222;
  background: #fafafa;
  border: 1px solid #a9a9a9;
  border-radius: 0;
}
.combo::before {
  content: "";
  position: absolute;
  top: 2px;
  right: 1px;
  bottom: 2px;
  width: 20px;
  border: 1px solid #777;
  background: linear-gradient(#f6f6f6, #dcdcdc);
  pointer-events: none;
}
.combo::after {
  content: "";
  position: absolute;
  top: 10px;
  right: 7px;
  border: 4px solid transparent;
  border-top: 5px solid #111;
  border-bottom: none;
  pointer-events: none;
}
.w-filter { width: 109px; }
.w-filter select { padding-left: 1px; }
.w-color { width: 130px; }
.w-module { width: 90px; }
.w-model { width: 88px; }

/* work area */
.work {
  flex: 1;
  min-height: 0;
  display: grid;
  grid-template-columns: 302px minmax(0, 1fr);
  gap: 4px;
  padding-top: 3px;
}
.side {
  display: flex;
  flex-direction: column;
  min-height: 0;
  padding: 3px 0 1px 2px;
}
.tabs {
  display: flex;
  align-items: flex-end;
  height: 24px;
}
.tab {
  height: 21px;
  padding: 0 7px;
  border: 1px solid #999;
  border-left: none;
  border-bottom: none;
  background: linear-gradient(#ececec, #d4d4d4);
}
.tab.active {
  height: 24px;
  padding: 0 8px;
  margin-bottom: -1px;
  border-left: 1px solid #999;
  background: #f9f9f9;
  z-index: 1;
}
.side-body {
  flex: 1;
  min-height: 0;
  display: flex;
  flex-direction: column;
  border: 1px solid #999;
}
.db-row {
  display: flex;
  align-items: center;
  gap: 9px;
  height: 33px;
  padding: 2px 0 0 2px;
}
.db-row button svg {
  display: block;
}
.db-icon {
  width: 17px;
  height: 16px;
  margin: 0 -29px 0 3px;
  z-index: 1;
}
.w-db {
  flex: 1;
}
.w-db select {
  padding-left: 22px;
}
.tree-box {
  position: relative;
  flex: 1;
  min-height: 0;
  display: flex;
  border-top: 1px solid #999;
  border-left: 1px solid #bbb;
  margin-left: 2px;
}
.tree {
  flex: 1;
  display: grid;
  grid-auto-rows: 1fr;
  padding-bottom: 2px;
  list-style: none;
}
.tree li {
  display: flex;
  align-items: center;
  min-height: 0;
  --rail: repeating-linear-gradient(#b5b5b5 0 1px, transparent 1px 2px);
  background: var(--rail) no-repeat;
  background-size: 1px 100%;
}
.tree .l0 { padding-left: 2px; background: none; }
.tree .l1 { padding-left: 19px; background-position: 6px 0; }
.tree .l2,
.tree .l3,
.tree .l4 {
  background-image: var(--rail), var(--rail);
  background-position: 6px 0, 40px 0;
}
.tree .l2 { padding-left: 36px; }
.tree .l3 { padding-left: 53px; }
.tree .l4 {
  padding-left: 70px;
  background-image: var(--rail), var(--rail), var(--rail);
  background-position: 6px 0, 40px 0, 74px 0;
}
.tree .last {
  background-size: 1px 100%, 1px 100%, 1px 50%;
}
.tree svg {
  width: 16px;
  height: 16px;
  margin: 0 3px 0 4px;
}
.tree span {
  padding: 0 2px;
  line-height: 18px;
  white-space: nowrap;
}
.tree i {
  width: 5px;
  height: 1px;
  margin-left: 4px;
  background: repeating-linear-gradient(90deg, #b5b5b5 0 1px, transparent 1px 2px);
}
.tree .under {
  margin-left: 5px;
  padding: 0;
  line-height: 15px;
  border-bottom: 2px solid #222;
}
.tree .selected {
  color: #fff;
  background: #338fdc;
}
.knob {
  width: 9px;
  height: 9px;
  border: 1px solid #9aa0a8;
  background: linear-gradient(#456, #456) center / 5px 1px no-repeat #fafafa;
}
.knob.plus {
  background:
    linear-gradient(#456, #456) center / 5px 1px no-repeat,
    linear-gradient(#456, #456) center / 1px 5px no-repeat #fafafa;
}

/* scroll bars */
.scroll {
  display: flex;
  flex-direction: column;
  width: 15px;
  background: #ececec;
}
.arrow {
  flex: none;
  width: 8px;
  margin: 7px auto;
  border: 4px solid transparent;
}
.arrow.up { border-top: none; border-bottom-color: #444; }
.arrow.down { margin-top: auto; border-bottom: none; border-top-color: #444; }
.thumb {
  flex: 0 0 59%;
  border: 1px solid #999;
  border-radius: 2px;
  background:
    repeating-linear-gradient(#666 0 1px, transparent 1px 3px) center / 7px 7px no-repeat,
    linear-gradient(90deg, #f4f4f4, #dcdcdf 50%, #c2c2c8);
}
.pointer {
  position: absolute;
  top: 51px;
  left: 279px;
  width: 14px;
  height: 21px;
}

/* context bar */
.stage {
  display: flex;
  flex-direction: column;
  min-height: 0;
}
.context {
  display: flex;
  align-items: center;
  height: 29px;
  padding-left: 10px;
  background: linear-gradient(#fafafa, #f0f0f0 40%);
}
.context label {
  margin-right: 3px;
}
.context .next {
  margin-left: 12px;
}
.context span.next {
  margin-right: 3px;
}
.context input {
  appearance: none;
  width: 12px;
  height: 12px;
  margin-right: 4px;
  border: 1px solid #999;
  border-radius: 50%;
  background: radial-gradient(#ddd, #f6f6f6);
}
.context input:checked {
  background: radial-gradient(circle, #6fc3ea 0 1px, #1d5585 3px, #e6edf2 5px);
  border-color: #667;
}

.canvas-row {
  flex: 1;
  min-height: 0;
  display: flex;
}
.toolbox {
  width: 69px;
  padding: 0 3px;
  background: #f2f2f2;
}
.tool-group {
  display: grid;
  grid-template-columns: 28px 28px;
  grid-auto-rows: 28px;
  padding: 3px 2px;
  border-bottom: 1px solid #a8a8a8;
}
.tool-group:last-child {
  border-bottom: none;
}
.tool-group svg {
  display: block;
  width: 26px;
  height: 26px;
  margin: 1px;
}
.s4r {
  font: bold 8px "Liberation Sans", sans-serif;
  fill: #c02020;
}
.xyz {
  font: bold 9px "Liberation Sans", sans-serif;
  fill: #111;
}

.viewport {
  position: relative;
  flex: 1;
  background: linear-gradient(#302f62, #34326a 20%, #3f3d6e 55%, #5a5885 70%, #8482a6 87%, #a5a3bb);
}
.wire {
  position: absolute;
  left: 22px;
  right: 15px;
  top: 50%;
  height: 1px;
  background: #e6b9c2;
}
.compass {
  position: absolute;
  top: 5px;
  right: 28px;
  width: 56px;
  height: 78px;
}
.compass text,
.triad text {
  font: 9px "Liberation Sans", sans-serif;
  fill: #e8e040;
}
.triad {
  position: absolute;
  left: 59px;
  bottom: 30px;
  width: 34px;
  height: 34px;
}
.triad text {
  fill: #fff;
}

.prompt {
  display: flex;
  justify-content: flex-end;
  height: 34px;
  background: linear-gradient(#fafafa, #f0f0f0 50%);
}
.brand {
  width: 60px;
  height: 36px;
  margin: 2px -10px 0 0;
}
.brand text {
  font: italic bold 11px "Liberation Sans", sans-serif;
  fill: #2d2d88;
}

/* message area */
.messages {
  display: flex;
  height: 47px;
  margin: 4px 11px 0 2px;
  border: 1px solid #888;
  border-bottom: none;
  background: #f9f9f9;
}
.msg-tabs {
  width: 39px;
  border-right: 1px solid #888;
}
.msg-tabs button {
  display: block;
  width: 36px;
  height: 38px;
  padding-left: 1px;
  border-bottom: 1px solid #999;
  border-right: 1px solid #bbb;
}
.msg-tabs svg {
  width: 26px;
  height: 26px;
}
.msg-text {
  flex: 1;
  overflow: hidden;
  padding: 3px 4px 0;
  font: 13px/13px "Liberation Mono", monospace;
}
.msg-text table {
  border-collapse: collapse;
}
.msg-text td {
  padding: 0 18px 0 0;
  white-space: nowrap;
}
.msg-text td:first-child {
  width: 282px;
}
.msg-text td:nth-child(2) {
  width: 112px;
  padding-right: 8px;
}
.msg-text td:nth-child(3) {
  width: 130px;
}
.msg-text td:nth-child(4) {
  width: 120px;
}
.msg-text .mid {
  padding-left: 32px;
}
```
